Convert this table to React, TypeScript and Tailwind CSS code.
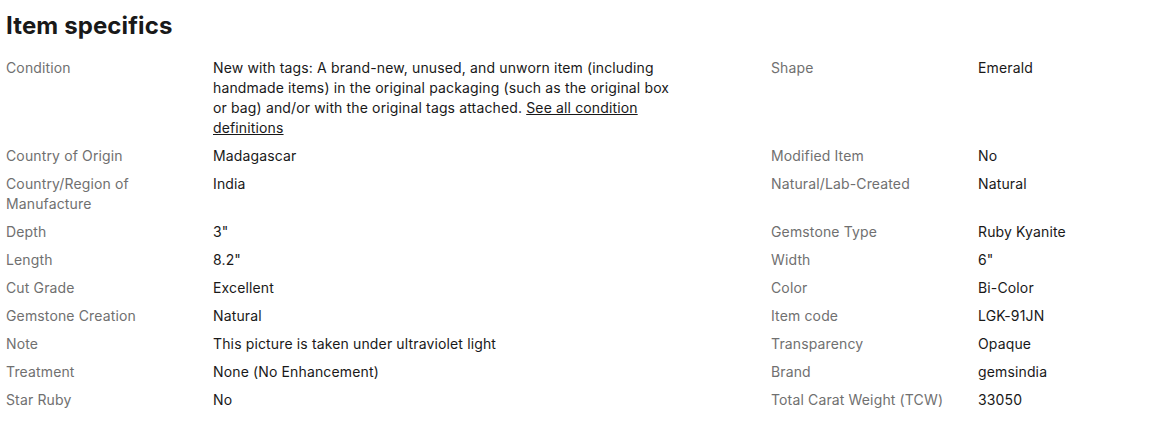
import React from "react";

type Spec = { label: string; value: React.ReactNode };

const rows: [Spec, Spec | null][] = [
  [
    {
      label: "Condition",
      value: (
        <>
          New with tags: A brand-new, unused, and unworn item (including handmade items) in the original packaging (such as the
          original box or bag) and/or with the original tags attached.{" "}
          <a href="#" className="underline">
            See all condition definitions
          </a>
        </>
      ),
    },
    { label: "Shape", value: "Emerald" },
  ],
  [
    { label: "Country of Origin", value: "Madagascar" },
    { label: "Modified Item", value: "No" },
  ],
  [
    { label: "Country/Region of Manufacture", value: "India" },
    { label: "Natural/Lab-Created", value: "Natural" },
  ],
  [
    { label: "Depth", value: '3"' },
    { label: "Gemstone Type", value: "Ruby Kyanite" },
  ],
  [
    { label: "Length", value: '8.2"' },
    { label: "Width", value: '6"' },
  ],
  [
    { label: "Cut Grade", value: "Excellent" },
    { label: "Color", value: "Bi-Color" },
  ],
  [
    { label: "Gemstone Creation", value: "Natural" },
    { label: "Item code", value: "LGK-91JN" },
  ],
  [
    { label: "Note", value: "This picture is taken under ultraviolet light" },
    { label: "Transparency", value: "Opaque" },
  ],
  [
    { label: "Treatment", value: "None (No Enhancement)" },
    { label: "Brand", value: "gemsindia" },
  ],
  [
    { label: "Star Ruby", value: "No" },
    { label: "Total Carat Weight (TCW)", value: "33050" },
  ],
];

const Cell = ({ spec, padRight }: { spec: Spec | null; padRight?: boolean }) => {
  if (!spec) return <><div /><div /></>;
  return (
    <>
      <div className="text-[#707070] pr-3">{spec.label}</div>
      <div className={padRight ? "text-[#191919] pr-[90px]" : "text-[#191919]"}>{spec.value}</div>
    </>
  );
};

const App = () => {
  return (
    <div className="w-[1165px] h-[426px] bg-white px-1.5 pt-2.5 font-['Inter',sans-serif] overflow-hidden">
      <h2 className="text-2xl leading-8 font-bold tracking-[0.005em] text-[#191919]">Item specifics</h2>
      <div className="mt-4 grid grid-cols-[207px_558px_207px_1fr] gap-y-2 text-sm leading-5 tracking-[0.01em]">
        {rows.map(([left, right], i) => (
          <React.Fragment key={i}>
            <Cell spec={left} padRight />
            <Cell spec={right} />
          </React.Fragment>
        ))}
      </div>
    </div>
  );
};

export default App;
